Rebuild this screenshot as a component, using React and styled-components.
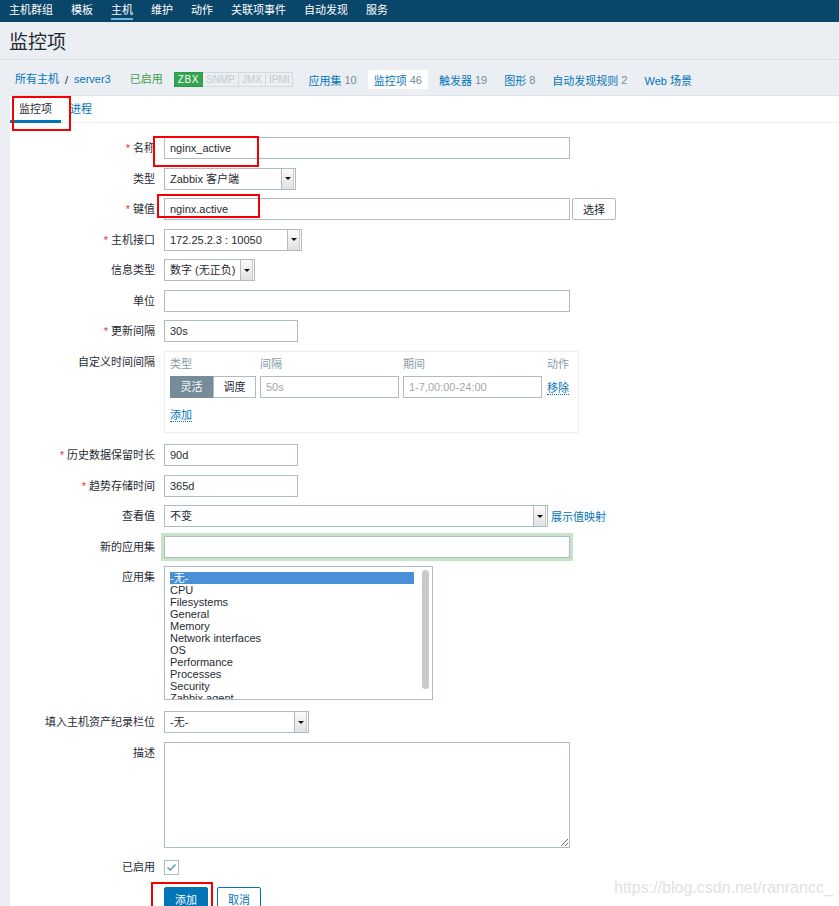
import React from 'react';
import styled, { createGlobalStyle, css } from 'styled-components';

const GlobalStyle = createGlobalStyle`
  html, body { margin: 0; padding: 0; overflow: hidden; background: #ebeef2; }
  body {
    font-family: "Liberation Sans", "Noto Sans CJK SC", sans-serif;
    font-size: 11px;
    color: #1f2c33;
  }
  * { box-sizing: border-box; }
`;

const FONT = `"Liberation Sans", "Noto Sans CJK SC", sans-serif`;
const LINK = '#0275b8';
const BORDER = '#acbbc4';

const Page = styled.div`
  position: relative;
  width: 839px;
  height: 906px;
  overflow: hidden;
`;

/* top navigation */
const TopNav = styled.nav`
  display: flex;
  height: 22px;
  background: #0a466a;
`;
const NavItem = styled.a`
  position: relative;
  padding: 0 9px;
  line-height: 21px;
  color: #fff;
  text-decoration: none;
  white-space: nowrap;
  ${p => p.$active && css`
    &::after {
      content: '';
      position: absolute;
      left: 9px; right: 9px; top: 18px;
      height: 2px;
      background: #6fb4e2;
    }
  `}
`;

/* header */
const Header = styled.header`
  height: 38px;
  border-bottom: 1px solid #dbe1e5;
  padding: 3px 0 0 9px;
  display: flex;
  align-items: center;
`;
const Title = styled.h1`
  margin: 0;
  font-size: 19px;
  font-weight: normal;
  line-height: 1;
  color: #1f2c33;
`;

/* breadcrumbs / host navigation */
const HostNav = styled.div`
  display: flex;
  align-items: center;
  height: 35px;
  padding: 4px 0 0 9px;
  gap: 5px;
`;
const CrumbGroup = styled.div`
  display: flex;
  align-items: center;
`;
const Crumb = styled.a`
  padding: 0 6px;
  line-height: 19px;
  color: ${LINK};
  text-decoration: none;
  white-space: nowrap;
`;
const Slash = styled.span`
  color: #1f2c33;
`;
const Status = styled.span`
  padding: 0 6px 0 8px;
  line-height: 19px;
  color: #429e47;
`;
const Badges = styled.div`
  display: flex;
  margin-right: 4px;
`;
const Badge = styled.span`
  height: 15px;
  padding: 0 3px;
  font-size: 10px;
  line-height: 13px;
  letter-spacing: ${p => (p.$on ? '0.6px' : '0')};
  border: 1px solid ${p => (p.$on ? '#2f9a4a' : '#d3dade')};
  background: ${p => (p.$on ? '#34a453' : 'transparent')};
  color: ${p => (p.$on ? '#fff' : '#c3ccd1')};
  & + & { border-left: none; }
`;
const HostTab = styled.a`
  display: flex;
  align-items: center;
  height: 19px;
  padding: 0 6px;
  border-radius: 2px;
  background: ${p => (p.$active ? '#fff' : 'transparent')};
  color: ${LINK};
  text-decoration: none;
  white-space: nowrap;
`;
const Count = styled.span`
  color: #768d99;
  margin-left: 3px;
`;

/* panel */
const Panel = styled.main`
  margin-left: 10px;
  background: #fff;
  border-top: 1px solid #dfe4e7;
  height: 900px;
`;
const TabBar = styled.div`
  display: flex;
  border-bottom: 1px solid #ebeef2;
`;
const Tab = styled.a`
  height: 27px;
  margin-bottom: -1px;
  padding: 2px 9px 0;
  line-height: 22px;
  border-bottom: 3px solid ${p => (p.$active ? LINK : 'transparent')};
  color: ${p => (p.$active ? '#1f2c33' : LINK)};
  text-decoration: none;
`;

const Form = styled.form`
  display: flex;
  flex-direction: column;
  gap: 8.5px;
  padding-top: 14px;
`;
const Row = styled.div`
  display: grid;
  grid-template-columns: 145px 1fr;
  column-gap: 9px;
  align-items: start;
  margin-bottom: ${p => p.$mb || 0}px;
`;
const Label = styled.label`
  text-align: right;
  line-height: 22px;
  white-space: nowrap;
  color: #1f2c33;
  ${p => p.$req && css`
    &::before {
      content: '*';
      color: #e33734;
      margin-right: 3px;
    }
  `}
`;
const Field = styled.div`
  display: flex;
  align-items: center;
  gap: ${p => p.$gap ?? 2}px;
  min-height: 22px;
`;

const TextInput = styled.input`
  width: ${p => p.$w}px;
  height: 22px;
  padding: 0 5px;
  border: 1px solid ${BORDER};
  background: #fff;
  font-family: ${FONT};
  font-size: 11px;
  color: #1f2c33;
  outline: none;
  ${p => p.$focus && css`box-shadow: 0 0 0 3px #c8e4c8;`}
  &::placeholder { color: #a3a8ab; }
`;

const SelectBox = styled.div`
  display: flex;
  align-items: stretch;
  width: ${p => p.$w}px;
  height: 22px;
  border: 1px solid ${BORDER};
  background: #fff;
`;
const SelectText = styled.span`
  flex: 1;
  padding-left: 5px;
  line-height: 20px;
  white-space: nowrap;
  overflow: hidden;
`;
const SelectArrow = styled.span`
  width: 13px;
  margin: 0 1px 0 0;
  display: flex;
  align-items: center;
  justify-content: center;
  background: linear-gradient(#fbfbfb, #e1e1e1);
  border-left: 1px solid #b9b9b9;
  border-right: 1px solid #c8c8c8;
  &::after {
    content: '';
    border-left: 3px solid transparent;
    border-right: 3px solid transparent;
    border-top: 3px solid #111;
  }
`;
const Select = ({ w, children }) => (
  <SelectBox $w={w}>
    <SelectText>{children}</SelectText>
    <SelectArrow />
  </SelectBox>
);

const Button = styled.button`
  height: ${p => p.$h || 22}px;
  padding: 0 ${p => p.$px ?? 10}px;
  font-family: ${FONT};
  font-size: 11px;
  border-radius: 2px;
  cursor: pointer;
  ${p => p.$variant === 'primary' && css`
    background: ${LINK}; border: 1px solid ${LINK}; color: #fff;
  `}
  ${p => p.$variant === 'outline' && css`
    background: #fff; border: 1px solid ${LINK}; color: ${LINK};
  `}
  ${p => p.$variant === 'plain' && css`
    background: #fff; border: 1px solid ${BORDER}; color: #1f2c33;
  `}
`;

const ActionLink = styled.a`
  color: ${LINK};
  text-decoration: none;
  border-bottom: 1px dotted ${LINK};
  line-height: 13px;
  white-space: nowrap;
  justify-self: start;
`;
const PlainLink = styled.a`
  color: ${LINK};
  text-decoration: none;
  white-space: nowrap;
`;

/* custom intervals */
const IntervalBox = styled.div`
  width: 415px;
  border: 1px solid #ebeef2;
  padding: 5px 5px 10px;
  display: grid;
  grid-template-columns: 86px 139px 139px auto;
  column-gap: 4px;
  row-gap: 5px;
  align-items: center;
`;
const ColHead = styled.span`
  line-height: 14px;
  color: #8a9ba5;
  padding-left: ${p => p.$pl || 0}px;
`;
const Segmented = styled.div`
  display: flex;
`;
const Seg = styled.span`
  width: 43px;
  height: 22px;
  line-height: 20px;
  text-align: center;
  border: 1px solid ${p => (p.$active ? '#768d99' : BORDER)};
  background: ${p => (p.$active ? '#768d99' : '#fff')};
  color: ${p => (p.$active ? '#fff' : '#1f2c33')};
`;
const AddCell = styled.div`
  grid-column: 1 / -1;
  margin-top: 5px;
  line-height: 14px;
`;
const CellLink = styled.div`
  padding: 2px 0 0 1px;
  line-height: 14px;
`;

/* listbox */
const ListBox = styled.div`
  display: flex;
  width: 269px;
  height: 134px;
  border: 1px solid ${BORDER};
  background: #fff;
`;
const ListItems = styled.div`
  width: 244px;
  margin-left: 5px;
  padding-top: 5px;
  overflow: hidden;
`;
const ListItem = styled.div`
  line-height: 12px;
  white-space: nowrap;
  background: ${p => (p.$sel ? '#4a90d9' : 'transparent')};
  color: ${p => (p.$sel ? '#fff' : '#1f2c33')};
`;
const ScrollThumb = styled.div`
  width: 7px;
  margin: 3px 0 10px 8px;
  border-radius: 4px;
  background: #c9c9c9;
`;

const TextArea = styled.textarea`
  width: 406px;
  height: 106px;
  border: 1px solid ${BORDER};
  font-family: ${FONT};
  font-size: 11px;
  outline: none;
  resize: both;
  padding: 4px 5px;
`;

const CheckBox = styled.span`
  display: inline-flex;
  align-items: center;
  justify-content: center;
  width: 15px;
  height: 15px;
  border: 1px solid ${BORDER};
  background: #fff;
`;

/* overlays: annotation marks and watermark */
const Mark = styled.div`
  position: absolute;
  border: 2px solid #f40000;
  pointer-events: none;
`;
const Watermark = styled.div`
  position: absolute;
  left: 614px;
  top: 879px;
  font-size: 16px;
  line-height: 18px;
  color: #e2e2e2;
  white-space: nowrap;
`;

const navItems = ['主机群组', '模板', '主机', '维护', '动作', '关联项事件', '自动发现', '服务'];
const apps = ['-无-', 'CPU', 'Filesystems', 'General', 'Memory', 'Network interfaces', 'OS', 'Performance', 'Processes', 'Security', 'Zabbix agent'];

export default function App() {
  return (
    <Page>
      <GlobalStyle />
      <TopNav>
        {navItems.map(n => (
          <NavItem key={n} $active={n === '主机'}>{n}</NavItem>
        ))}
      </TopNav>

      <Header>
        <Title>监控项</Title>
      </Header>

      <HostNav>
        <CrumbGroup>
          <Crumb>所有主机</Crumb>
          <Slash>/</Slash>
          <Crumb>server3</Crumb>
        </CrumbGroup>
        <Status>已启用</Status>
        <Badges>
          <Badge $on>ZBX</Badge>
          <Badge>SNMP</Badge>
          <Badge>JMX</Badge>
          <Badge>IPMI</Badge>
        </Badges>
        <HostTab>应用集<Count>10</Count></HostTab>
        <HostTab $active>监控项<Count>46</Count></HostTab>
        <HostTab>触发器<Count>19</Count></HostTab>
        <HostTab>图形<Count>8</Count></HostTab>
        <HostTab>自动发现规则<Count>2</Count></HostTab>
        <HostTab>Web 场景</HostTab>
      </HostNav>

      <Panel>
        <TabBar>
          <Tab $active>监控项</Tab>
          <Tab>进程</Tab>
        </TabBar>

        <Form>
          <Row>
            <Label $req>名称</Label>
            <Field><TextInput $w={406} defaultValue="nginx_active" /></Field>
          </Row>
          <Row>
            <Label>类型</Label>
            <Field><Select w={132}>Zabbix 客户端</Select></Field>
          </Row>
          <Row>
            <Label $req>键值</Label>
            <Field>
              <TextInput $w={406} defaultValue="nginx.active" />
              <Button type="button" $variant="plain" $px={10}>选择</Button>
            </Field>
          </Row>
          <Row>
            <Label $req>主机接口</Label>
            <Field><Select w={138}>172.25.2.3 : 10050</Select></Field>
          </Row>
          <Row>
            <Label>信息类型</Label>
            <Field><Select w={91}>数字 (无正负)</Select></Field>
          </Row>
          <Row>
            <Label>单位</Label>
            <Field><TextInput $w={406} /></Field>
          </Row>
          <Row>
            <Label $req>更新间隔</Label>
            <Field><TextInput $w={134} defaultValue="30s" /></Field>
          </Row>
          <Row $mb={3}>
            <Label>自定义时间间隔</Label>
            <IntervalBox>
              <ColHead>类型</ColHead>
              <ColHead>间隔</ColHead>
              <ColHead>期间</ColHead>
              <ColHead $pl={1}>动作</ColHead>
              <Segmented>
                <Seg $active>灵活</Seg>
                <Seg>调度</Seg>
              </Segmented>
              <TextInput $w={139} placeholder="50s" />
              <TextInput $w={139} placeholder="1-7,00:00-24:00" />
              <CellLink><ActionLink>移除</ActionLink></CellLink>
              <AddCell><ActionLink>添加</ActionLink></AddCell>
            </IntervalBox>
          </Row>
          <Row>
            <Label $req>历史数据保留时长</Label>
            <Field><TextInput $w={134} defaultValue="90d" /></Field>
          </Row>
          <Row>
            <Label $req>趋势存储时间</Label>
            <Field><TextInput $w={134} defaultValue="365d" /></Field>
          </Row>
          <Row>
            <Label>查看值</Label>
            <Field $gap={3}>
              <Select w={384}>不变</Select>
              <PlainLink>展示值映射</PlainLink>
            </Field>
          </Row>
          <Row>
            <Label>新的应用集</Label>
            <Field><TextInput $w={406} $focus /></Field>
          </Row>
          <Row $mb={2.5}>
            <Label>应用集</Label>
            <ListBox>
              <ListItems>
                {apps.map((a, i) => (
                  <ListItem key={a} $sel={i === 0}>{a}</ListItem>
                ))}
              </ListItems>
              <ScrollThumb />
            </ListBox>
          </Row>
          <Row>
            <Label>填入主机资产纪录栏位</Label>
            <Field><Select w={145}>-无-</Select></Field>
          </Row>
          <Row>
            <Label>描述</Label>
            <Field><TextArea /></Field>
          </Row>
          <Row>
            <Label>已启用</Label>
            <Field>
              <CheckBox>
                <svg width="11" height="9" viewBox="0 0 11 9">
                  <polyline points="1.5,4.5 4.2,7 9.5,1.5" fill="none" stroke="#4a98c9" strokeWidth="1.4" />
                </svg>
              </CheckBox>
            </Field>
          </Row>
          <Row>
            <span />
            <Field $gap={9}>
              <Button type="button" $variant="primary" $h={24}>添加</Button>
              <Button type="button" $variant="outline" $h={24}>取消</Button>
            </Field>
          </Row>
        </Form>
      </Panel>

      <Mark style={{ left: 12, top: 96, width: 59, height: 35 }} />
      <Mark style={{ left: 153, top: 136, width: 106, height: 31 }} />
      <Mark style={{ left: 157, top: 194, width: 103, height: 24 }} />
      <Mark style={{ left: 151, top: 882, width: 62, height: 40 }} />
      <Watermark>https://blog.csdn.net/ranrancc_</Watermark>
    </Page>
  );
}
